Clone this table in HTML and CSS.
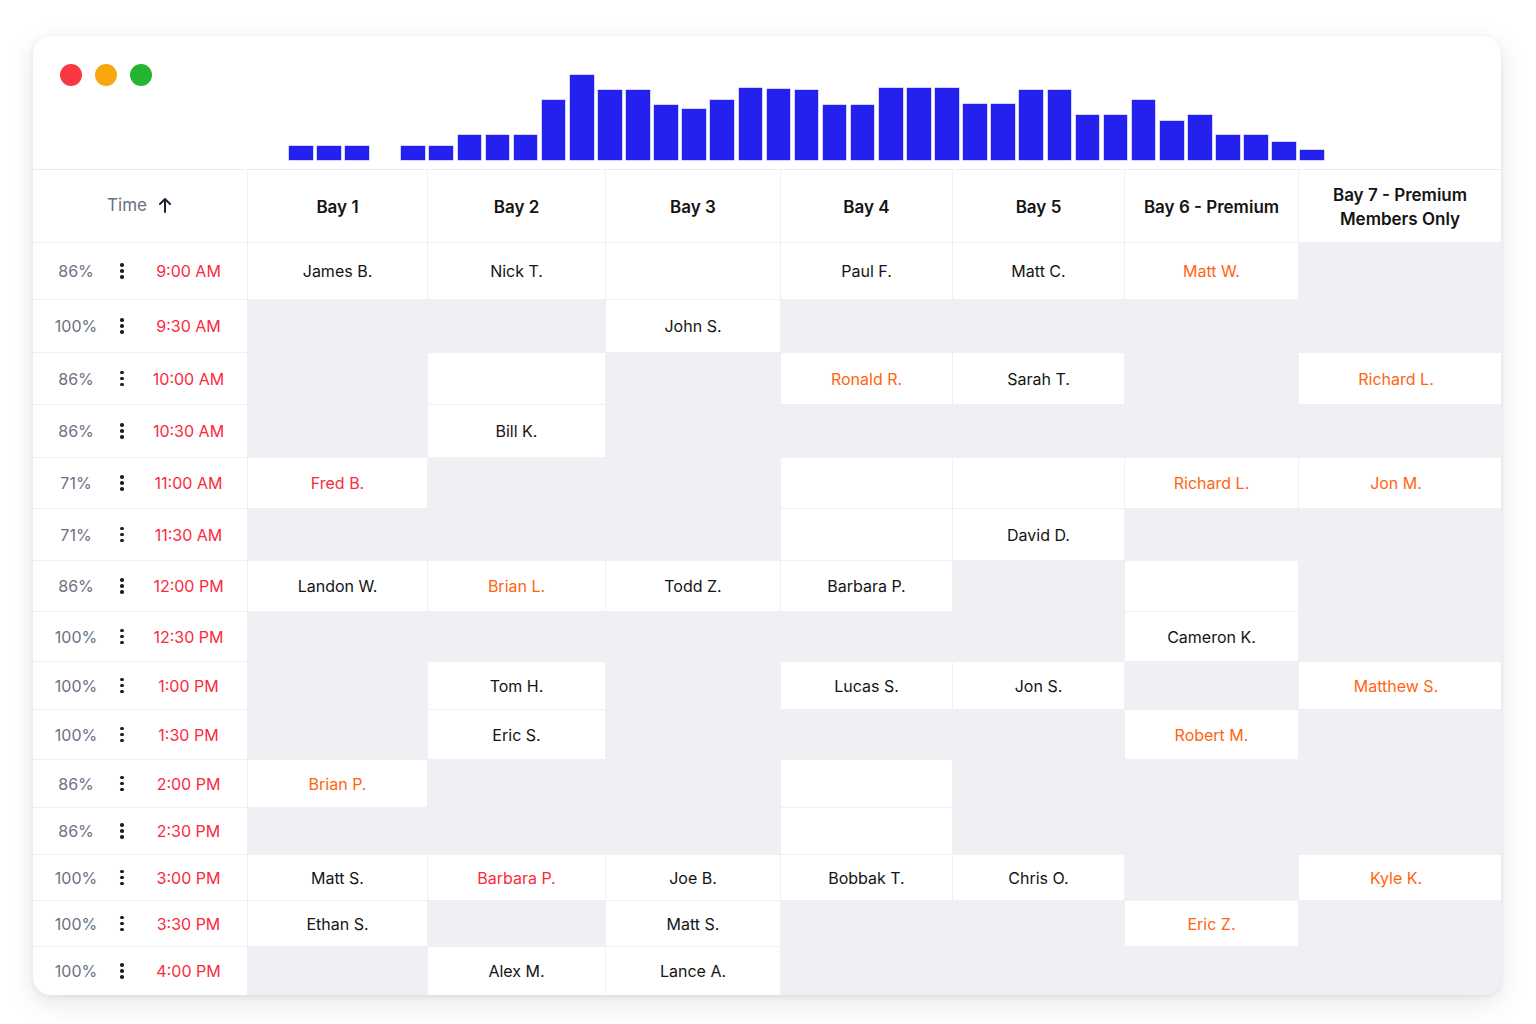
FILE: index.html
```html
<!DOCTYPE html>
<html lang="en">
<head>
<meta charset="utf-8">
<title>Bay schedule</title>
<link rel="stylesheet" href="styles.css">
</head>
<body>
<div class="page">
  <div class="window">
    <div class="titlebar">
      <div class="dots">
        <span class="dot red"></span>
        <span class="dot amber"></span>
        <span class="dot green"></span>
      </div>
      <div class="chart">
        <span class="bar" style="height:14px"></span>
        <span class="bar" style="height:14px"></span>
        <span class="bar" style="height:14px"></span>
        <span class="bar empty"></span>
        <span class="bar" style="height:14px"></span>
        <span class="bar" style="height:14px"></span>
        <span class="bar" style="height:25px"></span>
        <span class="bar" style="height:25px"></span>
        <span class="bar" style="height:25px"></span>
        <span class="bar" style="height:60px"></span>
        <span class="bar" style="height:85px"></span>
        <span class="bar" style="height:70px"></span>
        <span class="bar" style="height:70px"></span>
        <span class="bar" style="height:55px"></span>
        <span class="bar" style="height:51px"></span>
        <span class="bar" style="height:60px"></span>
        <span class="bar" style="height:72px"></span>
        <span class="bar" style="height:71px"></span>
        <span class="bar" style="height:70px"></span>
        <span class="bar" style="height:55px"></span>
        <span class="bar" style="height:55px"></span>
        <span class="bar" style="height:72px"></span>
        <span class="bar" style="height:72px"></span>
        <span class="bar" style="height:72px"></span>
        <span class="bar" style="height:56px"></span>
        <span class="bar" style="height:56px"></span>
        <span class="bar" style="height:70px"></span>
        <span class="bar" style="height:70px"></span>
        <span class="bar" style="height:45px"></span>
        <span class="bar" style="height:45px"></span>
        <span class="bar" style="height:60px"></span>
        <span class="bar" style="height:39px"></span>
        <span class="bar" style="height:45px"></span>
        <span class="bar" style="height:25px"></span>
        <span class="bar" style="height:25px"></span>
        <span class="bar" style="height:18px"></span>
        <span class="bar" style="height:10px"></span>
      </div>
    </div>

    <div class="grid">
      <!-- header -->
      <div class="hd time-hd"><span class="time-label">Time</span>
        <svg class="arrow" viewBox="0 0 12 16" width="12" height="16"><path d="M6 15V2M1 7l5-5 5 5" fill="none" stroke="#1e2132" stroke-width="2" stroke-linecap="round" stroke-linejoin="round"/></svg>
      </div>
      <div class="hd">Bay 1</div>
      <div class="hd">Bay 2</div>
      <div class="hd">Bay 3</div>
      <div class="hd">Bay 4</div>
      <div class="hd">Bay 5</div>
      <div class="hd">Bay 6 - Premium</div>
      <div class="hd">Bay 7 - Premium<br>Members Only</div>

      <!-- 9:00 -->
      <div class="tm"><span class="pct">86%</span><span class="kebab"><i></i><i></i><i></i></span><span class="clock">9:00 AM</span></div>
      <div class="c on">James B.</div>
      <div class="c on">Nick T.</div>
      <div class="c on"></div>
      <div class="c on">Paul F.</div>
      <div class="c on">Matt C.</div>
      <div class="c on o">Matt W.</div>
      <div class="c last"></div>

      <!-- 9:30 -->
      <div class="tm"><span class="pct">100%</span><span class="kebab"><i></i><i></i><i></i></span><span class="clock">9:30 AM</span></div>
      <div class="c"></div>
      <div class="c"></div>
      <div class="c on">John S.</div>
      <div class="c"></div>
      <div class="c"></div>
      <div class="c"></div>
      <div class="c last"></div>

      <!-- 10:00 -->
      <div class="tm"><span class="pct">86%</span><span class="kebab"><i></i><i></i><i></i></span><span class="clock">10:00 AM</span></div>
      <div class="c"></div>
      <div class="c on"></div>
      <div class="c"></div>
      <div class="c on o">Ronald R.</div>
      <div class="c on">Sarah T.</div>
      <div class="c"></div>
      <div class="c last on o">Richard L.</div>

      <!-- 10:30 -->
      <div class="tm"><span class="pct">86%</span><span class="kebab"><i></i><i></i><i></i></span><span class="clock">10:30 AM</span></div>
      <div class="c"></div>
      <div class="c on">Bill K.</div>
      <div class="c"></div>
      <div class="c"></div>
      <div class="c"></div>
      <div class="c"></div>
      <div class="c last"></div>

      <!-- 11:00 -->
      <div class="tm"><span class="pct">71%</span><span class="kebab"><i></i><i></i><i></i></span><span class="clock">11:00 AM</span></div>
      <div class="c on r">Fred B.</div>
      <div class="c"></div>
      <div class="c"></div>
      <div class="c on"></div>
      <div class="c on"></div>
      <div class="c on o">Richard L.</div>
      <div class="c last on o">Jon M.</div>

      <!-- 11:30 -->
      <div class="tm"><span class="pct">71%</span><span class="kebab"><i></i><i></i><i></i></span><span class="clock">11:30 AM</span></div>
      <div class="c"></div>
      <div class="c"></div>
      <div class="c"></div>
      <div class="c on"></div>
      <div class="c on">David D.</div>
      <div class="c"></div>
      <div class="c last"></div>

      <!-- 12:00 -->
      <div class="tm"><span class="pct">86%</span><span class="kebab"><i></i><i></i><i></i></span><span class="clock">12:00 PM</span></div>
      <div class="c on">Landon W.</div>
      <div class="c on o">Brian L.</div>
      <div class="c on">Todd Z.</div>
      <div class="c on">Barbara P.</div>
      <div class="c"></div>
      <div class="c on"></div>
      <div class="c last"></div>

      <!-- 12:30 -->
      <div class="tm"><span class="pct">100%</span><span class="kebab"><i></i><i></i><i></i></span><span class="clock">12:30 PM</span></div>
      <div class="c"></div>
      <div class="c"></div>
      <div class="c"></div>
      <div class="c"></div>
      <div class="c"></div>
      <div class="c on">Cameron K.</div>
      <div class="c last"></div>

      <!-- 1:00 -->
      <div class="tm"><span class="pct">100%</span><span class="kebab"><i></i><i></i><i></i></span><span class="clock">1:00 PM</span></div>
      <div class="c"></div>
      <div class="c on">Tom H.</div>
      <div class="c"></div>
      <div class="c on">Lucas S.</div>
      <div class="c on">Jon S.</div>
      <div class="c"></div>
      <div class="c last on o">Matthew S.</div>

      <!-- 1:30 -->
      <div class="tm"><span class="pct">100%</span><span class="kebab"><i></i><i></i><i></i></span><span class="clock">1:30 PM</span></div>
      <div class="c"></div>
      <div class="c on">Eric S.</div>
      <div class="c"></div>
      <div class="c"></div>
      <div class="c"></div>
      <div class="c on o">Robert M.</div>
      <div class="c last"></div>

      <!-- 2:00 -->
      <div class="tm"><span class="pct">86%</span><span class="kebab"><i></i><i></i><i></i></span><span class="clock">2:00 PM</span></div>
      <div class="c on o">Brian P.</div>
      <div class="c"></div>
      <div class="c"></div>
      <div class="c on"></div>
      <div class="c"></div>
      <div class="c"></div>
      <div class="c last"></div>

      <!-- 2:30 -->
      <div class="tm"><span class="pct">86%</span><span class="kebab"><i></i><i></i><i></i></span><span class="clock">2:30 PM</span></div>
      <div class="c"></div>
      <div class="c"></div>
      <div class="c"></div>
      <div class="c on"></div>
      <div class="c"></div>
      <div class="c"></div>
      <div class="c last"></div>

      <!-- 3:00 -->
      <div class="tm"><span class="pct">100%</span><span class="kebab"><i></i><i></i><i></i></span><span class="clock">3:00 PM</span></div>
      <div class="c on">Matt S.</div>
      <div class="c on r">Barbara P.</div>
      <div class="c on">Joe B.</div>
      <div class="c on">Bobbak T.</div>
      <div class="c on">Chris O.</div>
      <div class="c"></div>
      <div class="c last on o">Kyle K.</div>

      <!-- 3:30 -->
      <div class="tm"><span class="pct">100%</span><span class="kebab"><i></i><i></i><i></i></span><span class="clock">3:30 PM</span></div>
      <div class="c on">Ethan S.</div>
      <div class="c"></div>
      <div class="c on">Matt S.</div>
      <div class="c"></div>
      <div class="c"></div>
      <div class="c on o">Eric Z.</div>
      <div class="c last"></div>

      <!-- 4:00 -->
      <div class="tm"><span class="pct">100%</span><span class="kebab"><i></i><i></i><i></i></span><span class="clock">4:00 PM</span></div>
      <div class="c"></div>
      <div class="c on">Alex M.</div>
      <div class="c on">Lance A.</div>
      <div class="c"></div>
      <div class="c"></div>
      <div class="c"></div>
      <div class="c last"></div>
    </div>
  </div>
</div>
</body>
</html>
```

FILE: styles.css
```css
html, body {
  margin: 0;
  padding: 0;
  background: #ffffff;
}

body {
  font-family: Inter, "Noto Sans", "Liberation Sans", sans-serif;
  color: #151515;
  -webkit-font-smoothing: antialiased;
}

.page {
  padding: 36px 0 0 33px;
  width: 1536px;
  height: 1024px;
  box-sizing: border-box;
}

.window {
  width: 1468px;
  height: 959px;
  background: #ffffff;
  border-radius: 18px;
  overflow: hidden;
  box-shadow: 0 2px 6px rgba(20, 20, 40, 0.07), 0 8px 28px rgba(20, 20, 40, 0.10);
  display: flex;
  flex-direction: column;
}

/* ---------- title bar with chart ---------- */
.titlebar {
  height: 134px;
  box-sizing: border-box;
  border-bottom: 1px solid #ebecf1;
  display: flex;
  flex: none;
}

.dots {
  width: 256px;
  box-sizing: border-box;
  padding: 28px 0 0 27px;
  display: flex;
  gap: 13px;
  align-items: flex-start;
  flex: none;
}

.dot {
  width: 22px;
  height: 22px;
  border-radius: 50%;
  display: block;
}
.dot.red { background: #fb3841; }
.dot.amber { background: #f8a70c; }
.dot.green { background: #25b533; }

.chart {
  width: 1035px;
  display: grid;
  grid-template-columns: repeat(37, 1fr);
  column-gap: 4.5px;
  align-items: end;
  align-self: flex-end;
  margin-bottom: 9px;
  height: 100px;
}

.bar {
  display: block;
  background: #2420ee;
  box-shadow: 0 0 0 0.5px rgba(80, 80, 255, 0.5);
}

.bar.empty {
  height: 0;
  box-shadow: none;
}

/* ---------- table ---------- */
.grid {
  display: grid;
  grid-template-columns: 214px 179px 177px 174px 171px 171px 173px 1fr;
  grid-template-rows: 72px 56px 52px 51px 52px 50px 51px 50px 49px 47px 49px 47px 46px 45px 45px 48px;
  gap: 1px;
  background: #eff0f4;
  flex: 1;
}

.hd {
  background: #ffffff;
  display: flex;
  align-items: center;
  justify-content: center;
  text-align: center;
  font-weight: 600;
  font-size: 17px;
  line-height: 24px;
  color: #141414;
  padding-top: 1px;
}

.time-hd {
  gap: 12px;
  padding-top: 0;
  padding-bottom: 3px;
  padding-right: 2px;
}

.time-label {
  font-weight: 400;
  font-size: 17px;
  color: #6b6f84;
}

.arrow {
  display: block;
}

.tm {
  background: #ffffff;
  display: grid;
  grid-template-columns: 86px 6px 1fr;
  align-items: center;
  font-size: 16px;
}

.pct {
  text-align: center;
  color: #6d7083;
}

.kebab {
  display: flex;
  flex-direction: column;
  align-items: center;
  gap: 2.5px;
}

.kebab i {
  display: block;
  width: 3.5px;
  height: 3.5px;
  border-radius: 50%;
  background: #1d1d24;
}

.clock {
  text-align: center;
  padding-left: 5px;
  color: #fb2a3d;
}

.c {
  background: #eff0f4;
  display: flex;
  align-items: center;
  justify-content: center;
  font-size: 16px;
  color: #141414;
}

.c.last {
  padding-right: 8px;
}

.c.on {
  background: #ffffff;
}

.c.o {
  color: #ff6510;
}

.c.r {
  color: #fb2a3d;
}
```
